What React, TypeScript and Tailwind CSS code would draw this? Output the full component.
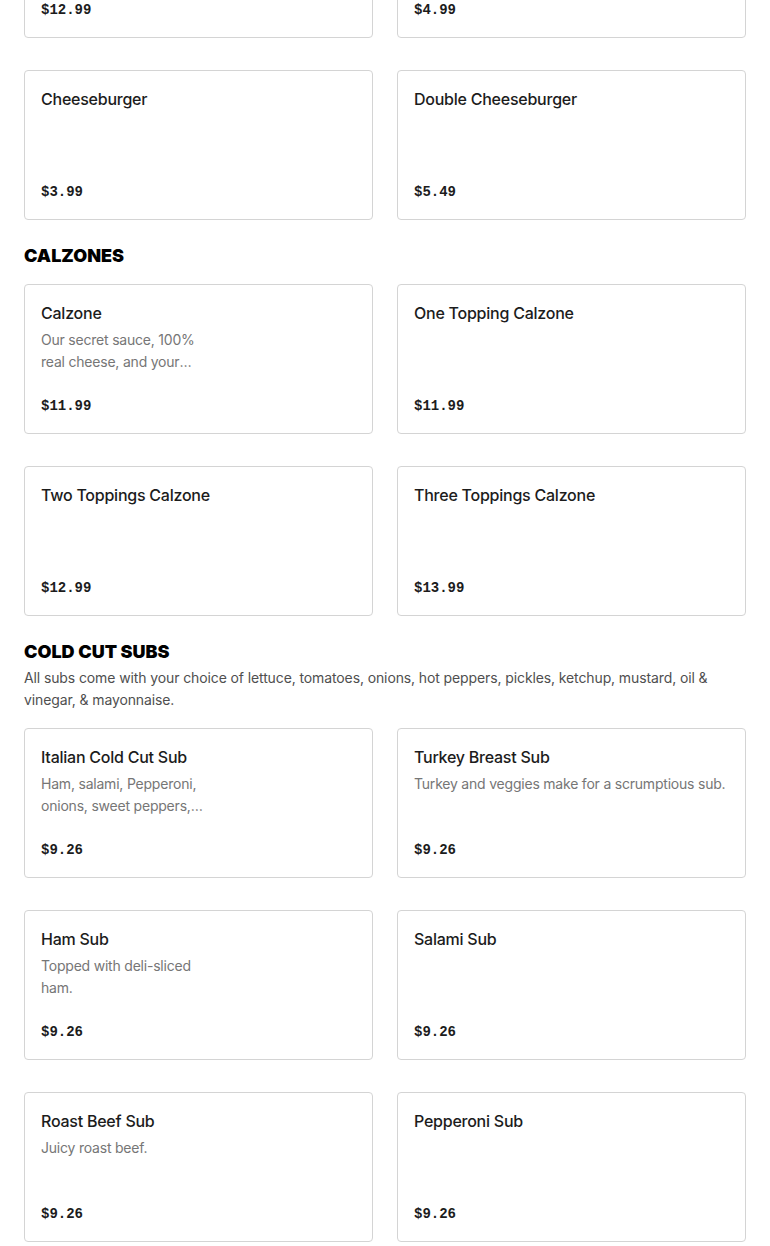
type Item = { name: string; desc?: string; price: string; wide?: boolean };

const burgers: Item[] = [
  { name: 'Bacon Burger', price: '$12.99' },
  { name: 'Hamburger', price: '$4.99' },
  { name: 'Cheeseburger', price: '$3.99' },
  { name: 'Double Cheeseburger', price: '$5.49' },
];

const calzones: Item[] = [
  { name: 'Calzone', desc: 'Our secret sauce, 100% real cheese, and your choice of toppings.', price: '$11.99' },
  { name: 'One Topping Calzone', price: '$11.99' },
  { name: 'Two Toppings Calzone', price: '$12.99' },
  { name: 'Three Toppings Calzone', price: '$13.99' },
];

const subs: Item[] = [
  { name: 'Italian Cold Cut Sub', desc: 'Ham, salami, Pepperoni, onions, sweet peppers, and provolone.', price: '$9.26' },
  { name: 'Turkey Breast Sub', desc: 'Turkey and veggies make for a scrumptious sub.', price: '$9.26', wide: true },
  { name: 'Ham Sub', desc: 'Topped with deli-sliced ham.', price: '$9.26' },
  { name: 'Salami Sub', price: '$9.26' },
  { name: 'Roast Beef Sub', desc: 'Juicy roast beef.', price: '$9.26' },
  { name: 'Pepperoni Sub', price: '$9.26' },
];

function MenuCard({ item }: { item: Item }) {
  return (
    <div className="flex h-[150px] flex-col justify-between rounded-[4px] border border-[#d4d4d4] bg-white px-4 pb-[15px] pt-4">
      <div>
        <h3 className="text-[16px] font-medium leading-6 tracking-[-0.015em] text-[#1c1c1c]">{item.name}</h3>
        {item.desc ? (
          <p
            className={
              item.wide
                ? 'mt-1 whitespace-nowrap text-[14px] leading-[22px] tracking-[-0.015em] text-[#767676]'
                : 'mt-1 line-clamp-2 w-[168px] text-[14px] leading-[22px] tracking-[-0.015em] text-[#767676]'
            }
          >
            {item.desc}
          </p>
        ) : null}
      </div>
      <p className="font-['Liberation_Mono',monospace] text-[14px] font-bold leading-6 text-[#1c1c1c]">{item.price}</p>
    </div>
  );
}

function Grid({ items }: { items: Item[] }) {
  return (
    <div className="grid grid-cols-2 gap-x-6 gap-y-8">
      {items.map((it) => (
        <MenuCard key={it.name} item={it} />
      ))}
    </div>
  );
}

function Section({ title, note, items }: { title: string; note?: string; items: Item[] }) {
  return (
    <section className="mt-6">
      <h2 className="text-[18px] font-black leading-6 text-black">{title}</h2>
      {note ? (
        <p className="mt-[3px] text-[14px] leading-[22px] tracking-[-0.008em] text-[#4f4f4f]">{note}</p>
      ) : null}
      <div className={note ? 'mt-[17px]' : 'mt-4'}>
        <Grid items={items} />
      </div>
    </section>
  );
}

export default function App() {
  return (
    <div className="h-[1246px] overflow-hidden bg-white font-['Inter',sans-serif]">
      <div className="-mt-[112px] px-6">
        <Grid items={burgers} />
        <Section title="CALZONES" items={calzones} />
        <Section
          title="COLD CUT SUBS"
          note="All subs come with your choice of lettuce, tomatoes, onions, hot peppers, pickles, ketchup, mustard, oil & vinegar, & mayonnaise."
          items={subs}
        />
      </div>
    </div>
  );
}
